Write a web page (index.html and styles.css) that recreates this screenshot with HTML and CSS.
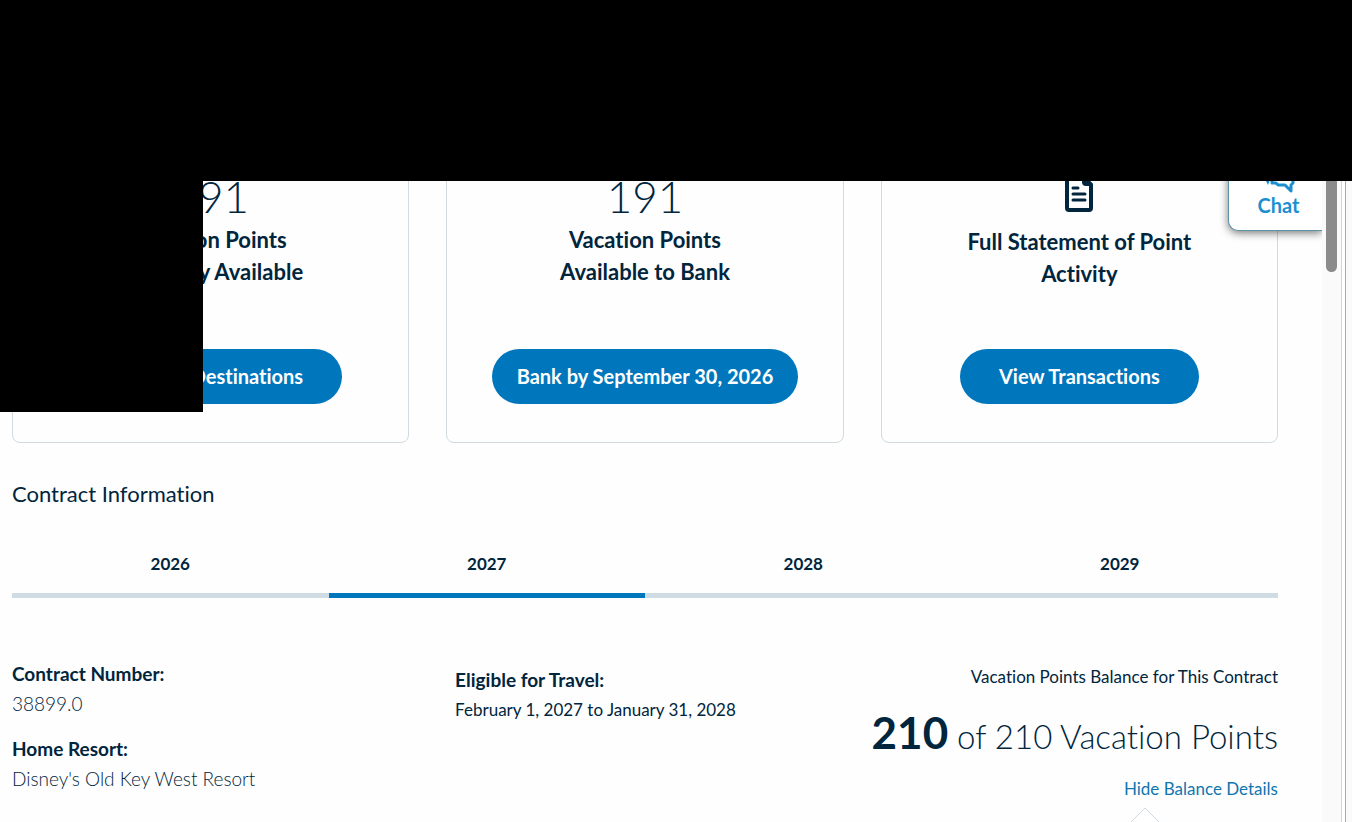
FILE: index.html
```html
<!DOCTYPE html>
<html lang="en">
<head>
<meta charset="utf-8">
<meta name="viewport" content="width=device-width, initial-scale=1">
<title>Vacation Points</title>
<link rel="stylesheet" href="styles.css">
</head>
<body>
<div class="frame">
  <main class="page">
    <section class="cards">
      <article class="card">
        <p class="card-number">191</p>
        <h2 class="card-label">Vacation Points<br>Currently Available</h2>
        <button class="pill pill-wide" type="button">Explore Destinations</button>
      </article>
      <article class="card">
        <p class="card-number">191</p>
        <h2 class="card-label">Vacation Points<br>Available to Bank</h2>
        <button class="pill" type="button">Bank by September 30, 2026</button>
      </article>
      <article class="card">
        <div class="card-icon">
          <svg width="30" height="38" viewBox="0 0 30 38" aria-hidden="true">
            <path d="M4 2H18L27 11V34Q27 36 25 36H5Q3 36 3 34V4" fill="none" stroke="#00253d" stroke-width="4" stroke-linejoin="round"/>
            <path d="M18 1V8Q18 12 22 12H29V10L20 1Z" fill="#00253d"/>
            <path d="M9 14H14M9 20H21M9 26H21" stroke="#00253d" stroke-width="3" stroke-linecap="round"/>
          </svg>
        </div>
        <h2 class="card-label">Full Statement of Point<br>Activity</h2>
        <button class="pill pill-wide" type="button">View Transactions</button>
      </article>
    </section>

    <h1 class="section-title">Contract Information</h1>

    <nav class="tabs" aria-label="Use year">
      <button class="tab" type="button">2026</button>
      <button class="tab tab-active" type="button">2027</button>
      <button class="tab" type="button">2028</button>
      <button class="tab" type="button">2029</button>
    </nav>

    <section class="details">
      <dl class="contract">
        <dt>Contract Number:</dt>
        <dd>38899.0</dd>
        <dt>Home Resort:</dt>
        <dd>Disney's Old Key West Resort</dd>
      </dl>
      <dl class="travel">
        <dt>Eligible for Travel:</dt>
        <dd>February 1, 2027 to January 31, 2028</dd>
      </dl>
      <div class="balance">
        <p class="balance-title">Vacation Points Balance for This Contract</p>
        <p class="balance-value"><strong>210</strong> of 210 Vacation Points</p>
        <a class="balance-link" href="#">Hide Balance Details</a>
        <svg class="caret" width="32" height="16" viewBox="0 0 32 16" aria-hidden="true">
          <path d="M1 16L16 1L31 16" fill="#fff" stroke="#cfd8df"/>
        </svg>
      </div>
    </section>

    <button class="chat" type="button">
      <svg width="42" height="32" viewBox="0 0 42 32" aria-hidden="true">
        <path d="M3 2H22V16H13L10 24L8 20H2L5 16Z" fill="#1b8fd0"/>
        <path d="M15 10H35V22L33 24V30L27 24H20L18 22H14V12Z" fill="#fff" stroke="#1b8fd0" stroke-width="3" stroke-linejoin="round"/>
      </svg>
      <span>Chat</span>
    </button>
  </main>
  <div class="scroll-track"><div class="scroll-thumb"></div></div>
  <div class="frame-edge"></div>
  <div class="mask mask-top"></div>
  <div class="mask mask-left"></div>
</div>
</body>
</html>
```
FILE: styles.css
```css
* { box-sizing: border-box; }
body {
  margin: 0;
  background: #fefefe;
  color: #00253d;
  font-family: Lato, "Open Sans", sans-serif;
  font-variant-ligatures: none;
}
h1, h2, p, dl, dd { margin: 0; }
button {
  border: 0;
  font-family: inherit;
  font-variant-ligatures: inherit;
  cursor: pointer;
}

.frame {
  position: relative;
  display: flex;
  height: 100vh;
  overflow: hidden;
}
.page {
  position: relative;
  flex: 1;
  padding: 120px 44px 0 12px;
  overflow: hidden;
}

.cards {
  display: grid;
  grid-template-columns: repeat(3, 1fr);
  gap: 37px;
}
.card {
  display: flex;
  flex-direction: column;
  align-items: center;
  min-height: 323px;
  padding: 47px 24px 38px;
  border: 1px solid #d0dadf;
  border-radius: 8px;
  text-align: center;
}
.card-number {
  font-size: 44px;
  font-weight: 300;
  line-height: 56px;
}
.card-icon {
  display: flex;
  align-items: flex-end;
  height: 58px;
  padding-bottom: 14px;
}
.card-label {
  font-size: 22px;
  font-weight: 700;
  line-height: 32px;
}
.pill {
  height: 55px;
  margin-top: auto;
  padding: 0 25px 2px;
  border-radius: 28px;
  background: #0077bc;
  color: #fff;
  font-size: 20px;
  font-weight: 700;
}
.pill-wide { padding: 0 39px 2px; }

.section-title {
  margin-top: 35px;
  font-size: 22px;
  font-weight: 400;
  line-height: 32px;
}

.tabs {
  display: grid;
  grid-template-columns: repeat(4, 1fr);
  margin-top: 37px;
}
.tab {
  height: 51px;
  padding: 0 0 14px;
  border-bottom: 5px solid #d0dce3;
  background: none;
  color: inherit;
  font-size: 17px;
  font-weight: 700;
}
.tab-active { border-color: #0077bc; }

.details {
  display: grid;
  grid-template-columns: 35% 25% 40%;
  margin-top: 61px;
}
.details dt { font-size: 19px; font-weight: 700; }
.contract { font-size: 19px; line-height: 30px; }
.contract dd { font-weight: 300; margin-bottom: 15px; }
.travel {
  padding-top: 6px;
  font-size: 17px;
  line-height: 30px;
  white-space: nowrap;
}
.balance {
  display: flex;
  flex-direction: column;
  align-items: flex-end;
  text-align: right;
  white-space: nowrap;
}
.balance-title { padding-top: 6px; font-size: 17px; line-height: 24px; }
.balance-value { margin-top: 13px; font-size: 33px; font-weight: 300; line-height: 60px; }
.balance-value strong { font-size: 44px; font-weight: 700; }
.balance-link {
  margin-top: 11px;
  color: #0f76b0;
  font-size: 17px;
  line-height: 24px;
  text-decoration: none;
}
.caret { margin: 6px 117px 0 0; }

.chat {
  position: absolute;
  top: 120px;
  right: 0;
  display: flex;
  flex-direction: column;
  align-items: center;
  justify-content: flex-end;
  width: 94px;
  height: 111px;
  padding: 0 0 13px 6px;
  border: solid #5f93a8;
  border-width: 0 0 1px 1px;
  border-radius: 0 0 0 10px;
  background: #fff;
  box-shadow: 0 2px 8px #0008;
  color: #1b8fd0;
  font-size: 20px;
  font-weight: 700;
  line-height: 24px;
}

.scroll-track {
  width: 20px;
  padding: 0 4px;
  border-right: 1px solid #d4d4d4;
  background: #fafafa;
}
.scroll-thumb {
  height: 272px;
  border-radius: 6px;
  background: #8b8b8b;
}
.frame-edge {
  width: 10px;
  border-left: 3px solid #fff;
  background: linear-gradient(90deg, #aaa 1px, #fafafa 1px);
}

.mask { position: absolute; left: 0; background: #000; }
.mask-top { top: 0; right: 0; height: 181px; }
.mask-left { top: 181px; width: 203px; height: 231px; }
```
